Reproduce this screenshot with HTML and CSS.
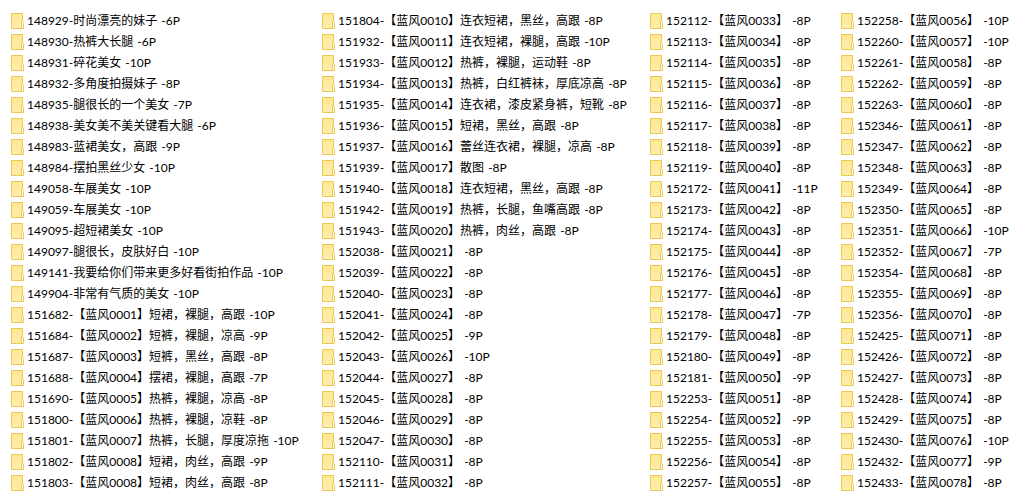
FILE: index.html
```html
<!DOCTYPE html>
<html lang="zh-CN">
<head>
  <meta charset="UTF-8" />
  <title>文件夹列表</title>
  <link rel="stylesheet" href="styles.css">
</head>
<body>
<svg class="defs" width="0" height="0">
  <defs>
    <linearGradient id="fill" x1="0" y1="0" x2="0" y2="1">
      <stop offset="0" stop-color="#ffe793"/>
      <stop offset="1" stop-color="#fdeeb0"/>
    </linearGradient>
    <symbol id="folder" viewBox="0 0 13 16">
      <path d="M.5.5h11v15H.5z" fill="url(#fill)" stroke="#eec950"/>
      <path d="M11.5 8.5h-1v7h2v-6z" fill="#fff" stroke="#eec950"/>
    </symbol>
  </defs>
</svg>
<div class="list">
  <div class="col col-a">
    <div class="row"><svg class="ico"><use href="#folder"/></svg>148929-时尚漂亮的妹子 -6P</div>
    <div class="row"><svg class="ico"><use href="#folder"/></svg>148930-热裤大长腿 -6P</div>
    <div class="row"><svg class="ico"><use href="#folder"/></svg>148931-碎花美女 -10P</div>
    <div class="row"><svg class="ico"><use href="#folder"/></svg>148932-多角度拍摄妹子 -8P</div>
    <div class="row"><svg class="ico"><use href="#folder"/></svg>148935-腿很长的一个美女 -7P</div>
    <div class="row"><svg class="ico"><use href="#folder"/></svg>148938-美女美不美关键看大腿 -6P</div>
    <div class="row"><svg class="ico"><use href="#folder"/></svg>148983-蓝裙美女，高跟 -9P</div>
    <div class="row"><svg class="ico"><use href="#folder"/></svg>148984-摆拍黑丝少女 -10P</div>
    <div class="row"><svg class="ico"><use href="#folder"/></svg>149058-车展美女 -10P</div>
    <div class="row"><svg class="ico"><use href="#folder"/></svg>149059-车展美女 -10P</div>
    <div class="row"><svg class="ico"><use href="#folder"/></svg>149095-超短裙美女 -10P</div>
    <div class="row"><svg class="ico"><use href="#folder"/></svg>149097-腿很长，皮肤好白 -10P</div>
    <div class="row"><svg class="ico"><use href="#folder"/></svg>149141-我要给你们带来更多好看街拍作品 -10P</div>
    <div class="row"><svg class="ico"><use href="#folder"/></svg>149904-非常有气质的美女 -10P</div>
    <div class="row"><svg class="ico"><use href="#folder"/></svg>151682-【蓝风0001】短裙，裸腿，高跟 -10P</div>
    <div class="row"><svg class="ico"><use href="#folder"/></svg>151684-【蓝风0002】短裤，裸腿，凉高 -9P</div>
    <div class="row"><svg class="ico"><use href="#folder"/></svg>151687-【蓝风0003】短裤，黑丝，高跟 -8P</div>
    <div class="row"><svg class="ico"><use href="#folder"/></svg>151688-【蓝风0004】摆裙，裸腿，高跟 -7P</div>
    <div class="row"><svg class="ico"><use href="#folder"/></svg>151690-【蓝风0005】热裤，裸腿，凉高 -8P</div>
    <div class="row"><svg class="ico"><use href="#folder"/></svg>151800-【蓝风0006】热裤，裸腿，凉鞋 -8P</div>
    <div class="row"><svg class="ico"><use href="#folder"/></svg>151801-【蓝风0007】热裤，长腿，厚度凉拖 -10P</div>
    <div class="row"><svg class="ico"><use href="#folder"/></svg>151802-【蓝风0008】短裙，肉丝，高跟 -9P</div>
    <div class="row"><svg class="ico"><use href="#folder"/></svg>151803-【蓝风0008】短裙，肉丝，高跟 -8P</div>
  </div>
  <div class="col col-b">
    <div class="row"><svg class="ico"><use href="#folder"/></svg>151804-【蓝风0010】连衣短裙，黑丝，高跟 -8P</div>
    <div class="row"><svg class="ico"><use href="#folder"/></svg>151932-【蓝风0011】连衣短裙，裸腿，高跟 -10P</div>
    <div class="row"><svg class="ico"><use href="#folder"/></svg>151933-【蓝风0012】热裤，裸腿，运动鞋 -8P</div>
    <div class="row"><svg class="ico"><use href="#folder"/></svg>151934-【蓝风0013】热裤，白红裤袜，厚底凉高 -8P</div>
    <div class="row"><svg class="ico"><use href="#folder"/></svg>151935-【蓝风0014】连衣裙，漆皮紧身裤，短靴 -8P</div>
    <div class="row"><svg class="ico"><use href="#folder"/></svg>151936-【蓝风0015】短裙，黑丝，高跟 -8P</div>
    <div class="row"><svg class="ico"><use href="#folder"/></svg>151937-【蓝风0016】蕾丝连衣裙，裸腿，凉高 -8P</div>
    <div class="row"><svg class="ico"><use href="#folder"/></svg>151939-【蓝风0017】散图 -8P</div>
    <div class="row"><svg class="ico"><use href="#folder"/></svg>151940-【蓝风0018】连衣短裙，黑丝，高跟 -8P</div>
    <div class="row"><svg class="ico"><use href="#folder"/></svg>151942-【蓝风0019】热裤，长腿，鱼嘴高跟 -8P</div>
    <div class="row"><svg class="ico"><use href="#folder"/></svg>151943-【蓝风0020】热裤，肉丝，高跟 -8P</div>
    <div class="row"><svg class="ico"><use href="#folder"/></svg>152038-【蓝风0021】 -8P</div>
    <div class="row"><svg class="ico"><use href="#folder"/></svg>152039-【蓝风0022】 -8P</div>
    <div class="row"><svg class="ico"><use href="#folder"/></svg>152040-【蓝风0023】 -8P</div>
    <div class="row"><svg class="ico"><use href="#folder"/></svg>152041-【蓝风0024】 -8P</div>
    <div class="row"><svg class="ico"><use href="#folder"/></svg>152042-【蓝风0025】 -9P</div>
    <div class="row"><svg class="ico"><use href="#folder"/></svg>152043-【蓝风0026】 -10P</div>
    <div class="row"><svg class="ico"><use href="#folder"/></svg>152044-【蓝风0027】 -8P</div>
    <div class="row"><svg class="ico"><use href="#folder"/></svg>152045-【蓝风0028】 -8P</div>
    <div class="row"><svg class="ico"><use href="#folder"/></svg>152046-【蓝风0029】 -8P</div>
    <div class="row"><svg class="ico"><use href="#folder"/></svg>152047-【蓝风0030】 -8P</div>
    <div class="row"><svg class="ico"><use href="#folder"/></svg>152110-【蓝风0031】 -8P</div>
    <div class="row"><svg class="ico"><use href="#folder"/></svg>152111-【蓝风0032】 -8P</div>
  </div>
  <div class="col col-c">
    <div class="row"><svg class="ico"><use href="#folder"/></svg>152112-【蓝风0033】 -8P</div>
    <div class="row"><svg class="ico"><use href="#folder"/></svg>152113-【蓝风0034】 -8P</div>
    <div class="row"><svg class="ico"><use href="#folder"/></svg>152114-【蓝风0035】 -8P</div>
    <div class="row"><svg class="ico"><use href="#folder"/></svg>152115-【蓝风0036】 -8P</div>
    <div class="row"><svg class="ico"><use href="#folder"/></svg>152116-【蓝风0037】 -8P</div>
    <div class="row"><svg class="ico"><use href="#folder"/></svg>152117-【蓝风0038】 -8P</div>
    <div class="row"><svg class="ico"><use href="#folder"/></svg>152118-【蓝风0039】 -8P</div>
    <div class="row"><svg class="ico"><use href="#folder"/></svg>152119-【蓝风0040】 -8P</div>
    <div class="row"><svg class="ico"><use href="#folder"/></svg>152172-【蓝风0041】 -11P</div>
    <div class="row"><svg class="ico"><use href="#folder"/></svg>152173-【蓝风0042】 -8P</div>
    <div class="row"><svg class="ico"><use href="#folder"/></svg>152174-【蓝风0043】 -8P</div>
    <div class="row"><svg class="ico"><use href="#folder"/></svg>152175-【蓝风0044】 -8P</div>
    <div class="row"><svg class="ico"><use href="#folder"/></svg>152176-【蓝风0045】 -8P</div>
    <div class="row"><svg class="ico"><use href="#folder"/></svg>152177-【蓝风0046】 -8P</div>
    <div class="row"><svg class="ico"><use href="#folder"/></svg>152178-【蓝风0047】 -7P</div>
    <div class="row"><svg class="ico"><use href="#folder"/></svg>152179-【蓝风0048】 -8P</div>
    <div class="row"><svg class="ico"><use href="#folder"/></svg>152180-【蓝风0049】 -8P</div>
    <div class="row"><svg class="ico"><use href="#folder"/></svg>152181-【蓝风0050】 -9P</div>
    <div class="row"><svg class="ico"><use href="#folder"/></svg>152253-【蓝风0051】 -8P</div>
    <div class="row"><svg class="ico"><use href="#folder"/></svg>152254-【蓝风0052】 -9P</div>
    <div class="row"><svg class="ico"><use href="#folder"/></svg>152255-【蓝风0053】 -8P</div>
    <div class="row"><svg class="ico"><use href="#folder"/></svg>152256-【蓝风0054】 -8P</div>
    <div class="row"><svg class="ico"><use href="#folder"/></svg>152257-【蓝风0055】 -8P</div>
  </div>
  <div class="col">
    <div class="row"><svg class="ico"><use href="#folder"/></svg>152258-【蓝风0056】 -10P</div>
    <div class="row"><svg class="ico"><use href="#folder"/></svg>152260-【蓝风0057】 -10P</div>
    <div class="row"><svg class="ico"><use href="#folder"/></svg>152261-【蓝风0058】 -8P</div>
    <div class="row"><svg class="ico"><use href="#folder"/></svg>152262-【蓝风0059】 -8P</div>
    <div class="row"><svg class="ico"><use href="#folder"/></svg>152263-【蓝风0060】 -8P</div>
    <div class="row"><svg class="ico"><use href="#folder"/></svg>152346-【蓝风0061】 -8P</div>
    <div class="row"><svg class="ico"><use href="#folder"/></svg>152347-【蓝风0062】 -8P</div>
    <div class="row"><svg class="ico"><use href="#folder"/></svg>152348-【蓝风0063】 -8P</div>
    <div class="row"><svg class="ico"><use href="#folder"/></svg>152349-【蓝风0064】 -8P</div>
    <div class="row"><svg class="ico"><use href="#folder"/></svg>152350-【蓝风0065】 -8P</div>
    <div class="row"><svg class="ico"><use href="#folder"/></svg>152351-【蓝风0066】 -10P</div>
    <div class="row"><svg class="ico"><use href="#folder"/></svg>152352-【蓝风0067】 -7P</div>
    <div class="row"><svg class="ico"><use href="#folder"/></svg>152354-【蓝风0068】 -8P</div>
    <div class="row"><svg class="ico"><use href="#folder"/></svg>152355-【蓝风0069】 -8P</div>
    <div class="row"><svg class="ico"><use href="#folder"/></svg>152356-【蓝风0070】 -8P</div>
    <div class="row"><svg class="ico"><use href="#folder"/></svg>152425-【蓝风0071】 -8P</div>
    <div class="row"><svg class="ico"><use href="#folder"/></svg>152426-【蓝风0072】 -8P</div>
    <div class="row"><svg class="ico"><use href="#folder"/></svg>152427-【蓝风0073】 -8P</div>
    <div class="row"><svg class="ico"><use href="#folder"/></svg>152428-【蓝风0074】 -8P</div>
    <div class="row"><svg class="ico"><use href="#folder"/></svg>152429-【蓝风0075】 -8P</div>
    <div class="row"><svg class="ico"><use href="#folder"/></svg>152430-【蓝风0076】 -10P</div>
    <div class="row"><svg class="ico"><use href="#folder"/></svg>152432-【蓝风0077】 -9P</div>
    <div class="row"><svg class="ico"><use href="#folder"/></svg>152433-【蓝风0078】 -8P</div>
  </div>
</div>
</body>
</html>
```

FILE: styles.css
```css
html,body{margin:0;background:#fff}
body{
  font-family:Lato,"Noto Sans CJK SC",sans-serif;
  font-size:12px;
  color:#000;
  word-spacing:1px;
  overflow:hidden;
}
.defs{display:block}
.list{display:flex;padding:10px 0 0 11px}
.col-a{width:311px}
.col-b{width:328px}
.col-c{width:191px}
.row{display:flex;align-items:center;gap:3px;height:21px;line-height:21px;white-space:pre}
.ico{width:13px;height:16px;flex:none}
```
